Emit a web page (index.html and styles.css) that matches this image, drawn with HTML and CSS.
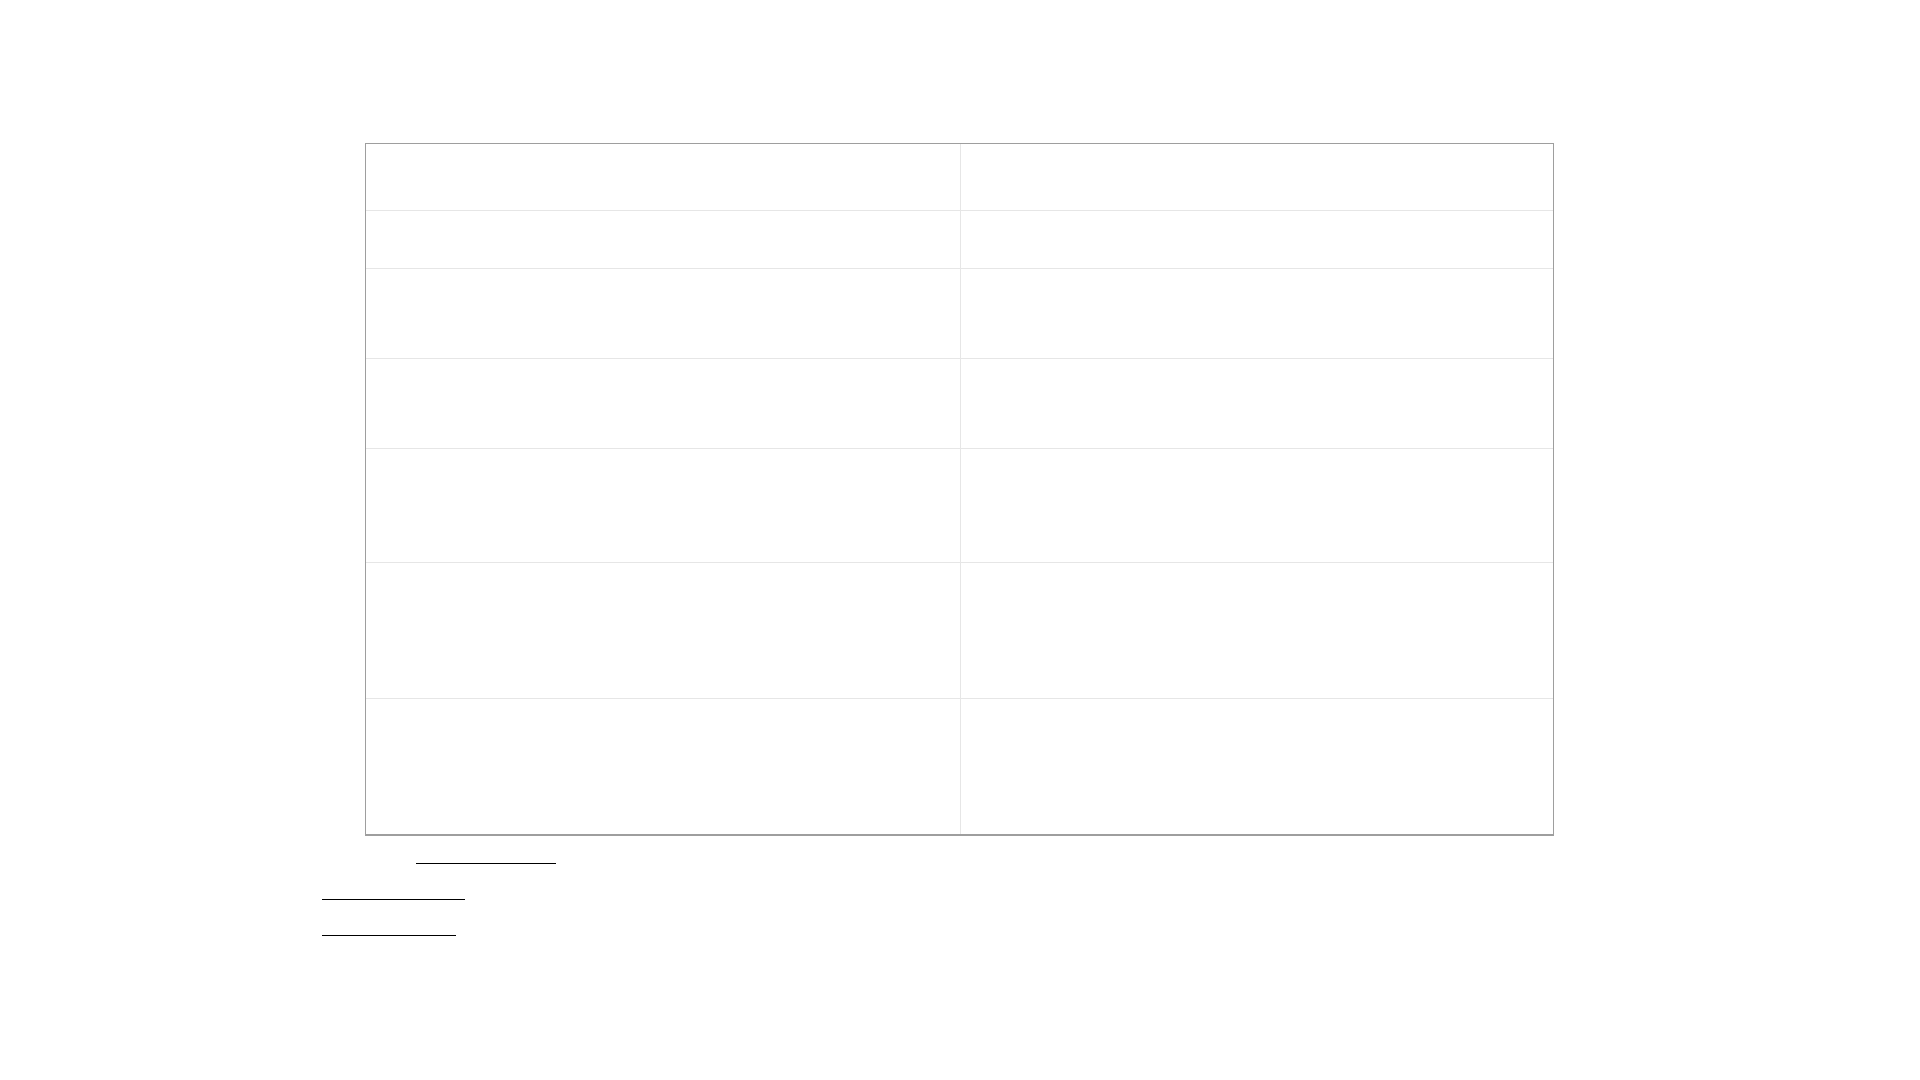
FILE: index.html
```html
<!DOCTYPE html>
<html lang="en">
<head>
<meta charset="utf-8">
<title>Table</title>
<link rel="stylesheet" href="styles.css">
</head>
<body>
<main class="page">
  <div class="grid-table">
    <div class="cell left h1"></div><div class="cell h1"></div>
    <div class="cell left h2"></div><div class="cell h2"></div>
    <div class="cell left h3"></div><div class="cell h3"></div>
    <div class="cell left h3"></div><div class="cell h3"></div>
    <div class="cell left h5"></div><div class="cell h5"></div>
    <div class="cell left h6"></div><div class="cell h6"></div>
    <div class="cell left h7 last"></div><div class="cell h7 last"></div>
  </div>
  <div class="links">
    <div class="link-row indent"><span class="link w1"></span></div>
    <div class="link-row"><span class="link w2"></span></div>
    <div class="link-row"><span class="link w3"></span></div>
  </div>
</main>
</body>
</html>
```

FILE: styles.css
```css
html, body {
  margin: 0;
  padding: 0;
  background: #ffffff;
  font-family: "Liberation Sans", Arial, sans-serif;
}

.page {
  padding-top: 143px;
}

.grid-table {
  width: 1187px;
  margin-left: 365px;
  display: grid;
  grid-template-columns: 595px 592px;
  border: 1px solid #9e9e9e;
  border-bottom-width: 2px;
}

.cell {
  border-bottom: 1px solid #e6e6e6;
}

.cell.left {
  border-right: 1px solid #e6e6e6;
}

.cell.last {
  border-bottom: none;
}

.h1 { height: 66px; }
.h2 { height: 57px; }
.h3 { height: 89px; }
.h5 { height: 113px; }
.h6 { height: 135px; }
.h7 { height: 135px; }

.links {
  padding-left: 322px;
}

.link-row {
  height: 36px;
}

.link-row.indent {
  padding-left: 94px;
}

.link {
  display: block;
  height: 27px;
  border-bottom: 1px solid #000000;
}

.w1 { width: 140px; }
.w2 { width: 143px; }
.w3 { width: 134px; }
```
